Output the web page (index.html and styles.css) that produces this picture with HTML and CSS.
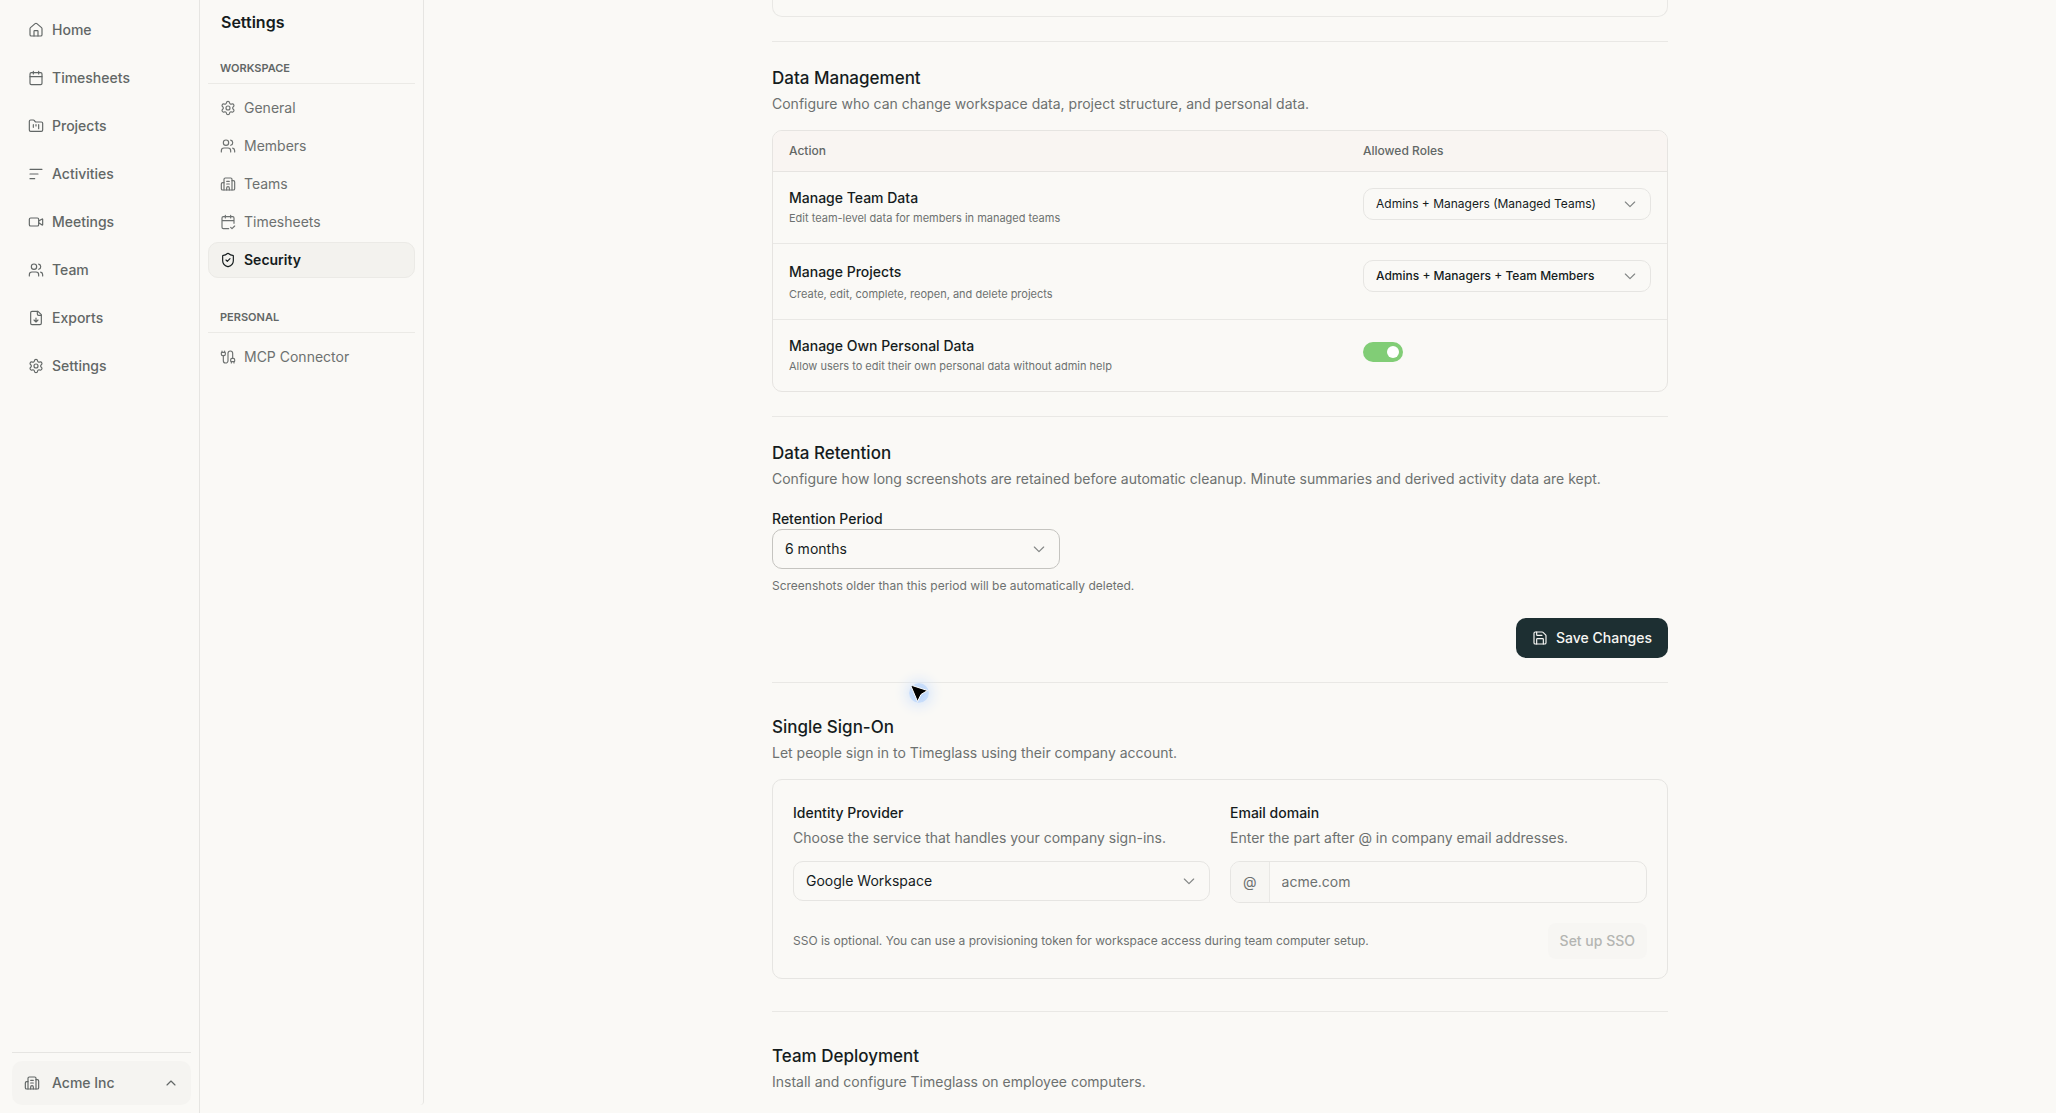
FILE: index.html
```html
<!DOCTYPE html>
<html lang="en">
<head>
    <meta charset="UTF-8">
    <meta name="viewport" content="width=device-width, initial-scale=1.0">
    <title>Security - Settings</title>
    <link rel="stylesheet" href="styles.css">
</head>
<body>
    <!-- Shared icons -->
    <svg class="sprite" aria-hidden="true">
        <symbol id="i-home" viewBox="0 0 24 24"><path d="M15 21v-7a1 1 0 0 0-1-1h-4a1 1 0 0 0-1 1v7"/><path d="M3 10a2 2 0 0 1 .7-1.5l7-6a2 2 0 0 1 2.6 0l7 6A2 2 0 0 1 21 10v9a2 2 0 0 1-2 2H5a2 2 0 0 1-2-2z"/></symbol>
        <symbol id="i-calendar" viewBox="0 0 24 24"><path d="M8 2v4M16 2v4M3 10h18"/><rect x="3" y="4" width="18" height="18" rx="2"/></symbol>
        <symbol id="i-folder" viewBox="0 0 24 24"><path d="M4 20h16a2 2 0 0 0 2-2V8a2 2 0 0 0-2-2h-7.9a2 2 0 0 1-1.7-.9l-.8-1.2A2 2 0 0 0 7.9 3H4a2 2 0 0 0-2 2v13a2 2 0 0 0 2 2z"/><path d="M8 10v4M12 10v2M16 10v6"/></symbol>
        <symbol id="i-lines" viewBox="0 0 24 24"><path d="M3 5h18M3 12h12M3 19h7"/></symbol>
        <symbol id="i-video" viewBox="0 0 24 24"><path d="m16 13 5.2 3.5a.5.5 0 0 0 .8-.4V7.9a.5.5 0 0 0-.8-.5L16 10.500"/><rect x="2" y="6" width="14" height="12" rx="2"/></symbol>
        <symbol id="i-users" viewBox="0 0 24 24"><path d="M16 21v-2a4 4 0 0 0-4-4H6a4 4 0 0 0-4 4v2"/><circle cx="9" cy="7" r="4"/><path d="M22 21v-2a4 4 0 0 0-3-3.900M16 3.100a4 4 0 0 1 0 7.800"/></symbol>
        <symbol id="i-export" viewBox="0 0 24 24"><path d="M15 2H6a2 2 0 0 0-2 2v16a2 2 0 0 0 2 2h12a2 2 0 0 0 2-2V7z"/><path d="M14 2v4a2 2 0 0 0 2 2h4M12 18v-6M9 15l3 3 3-3"/></symbol>
        <symbol id="i-gear" viewBox="0 0 24 24"><path d="M9.671 4.136a2.340 2.340 0 0 1 4.659 0 2.340 2.340 0 0 0 3.319 1.915 2.340 2.340 0 0 1 2.330 4.033 2.340 2.340 0 0 0 0 3.831 2.340 2.340 0 0 1-2.330 4.033 2.340 2.340 0 0 0-3.319 1.915 2.340 2.340 0 0 1-4.659 0 2.340 2.340 0 0 0-3.320-1.915 2.340 2.340 0 0 1-2.330-4.033 2.340 2.340 0 0 0 0-3.831A2.340 2.340 0 0 1 6.350 6.051a2.340 2.340 0 0 0 3.319-1.915"/><circle cx="12" cy="12" r="3"/></symbol>
        <symbol id="i-building" viewBox="0 0 24 24"><path d="M10 12h4M10 8h4M14 21v-3a2 2 0 0 0-4 0v3"/><path d="M6 10H4a2 2 0 0 0-2 2v7a2 2 0 0 0 2 2h16a2 2 0 0 0 2-2V9a2 2 0 0 0-2-2h-2"/><path d="M6 21V5a2 2 0 0 1 2-2h8a2 2 0 0 1 2 2v16"/></symbol>
        <symbol id="i-calendar-check" viewBox="0 0 24 24"><path d="M8 2v4M16 2v4M21 14V6a2 2 0 0 0-2-2H5a2 2 0 0 0-2 2v14a2 2 0 0 0 2 2h8M3 10h18M16 20l2 2 4-4"/></symbol>
        <symbol id="i-shield" viewBox="0 0 24 24"><path d="M20 13c0 5-3.500 7.500-7.660 8.950a1 1 0 0 1-.67-.01C7.500 20.500 4 18 4 13V6a1 1 0 0 1 1-1c2 0 4.500-1.200 6.240-2.720a1.170 1.170 0 0 1 1.520 0C14.510 3.810 17 5 19 5a1 1 0 0 1 1 1z"/><path d="m9 12 2 2 4-4"/></symbol>
        <symbol id="i-cable" viewBox="0 0 24 24"><path d="M17 19a1 1 0 0 1-1-1v-2a2 2 0 0 1 2-2h2a2 2 0 0 1 2 2v2a1 1 0 0 1-1 1zM17 21v-2M19 14V6.500a1 1 0 0 0-7 0v11a1 1 0 0 1-7 0V10M21 21v-2M3 5V3M4 10a2 2 0 0 1-2-2V6a1 1 0 0 1 1-1h4a1 1 0 0 1 1 1v2a2 2 0 0 1-2 2zM7 5V3"/></symbol>
        <symbol id="i-save" viewBox="0 0 24 24"><path d="M15.200 3a2 2 0 0 1 1.400.6l3.800 3.800a2 2 0 0 1 .6 1.400V19a2 2 0 0 1-2 2H5a2 2 0 0 1-2-2V5a2 2 0 0 1 2-2z"/><path d="M17 21v-7a1 1 0 0 0-1-1H8a1 1 0 0 0-1 1v7M7 3v4a1 1 0 0 0 1 1h7"/></symbol>
        <symbol id="i-down" viewBox="0 0 24 24"><path d="m5 9 7 7 7-7"/></symbol>
        <symbol id="i-up" viewBox="0 0 24 24"><path d="m6 15 6-6 6 6"/></symbol>
    </svg>

    <div class="app">
        <aside class="sidebar">
            <nav class="main-nav">
                <a href="#"><svg class="icon"><use href="#i-home"/></svg>Home</a>
                <a href="#"><svg class="icon"><use href="#i-calendar"/></svg>Timesheets</a>
                <a href="#"><svg class="icon"><use href="#i-folder"/></svg>Projects</a>
                <a href="#"><svg class="icon"><use href="#i-lines"/></svg>Activities</a>
                <a href="#"><svg class="icon"><use href="#i-video"/></svg>Meetings</a>
                <a href="#"><svg class="icon"><use href="#i-users"/></svg>Team</a>
                <a href="#"><svg class="icon"><use href="#i-export"/></svg>Exports</a>
                <a href="#"><svg class="icon"><use href="#i-gear"/></svg>Settings</a>
            </nav>
            <div class="sidebar-footer">
                <button class="workspace-button" type="button">
                    <svg class="icon"><use href="#i-building"/></svg>
                    <span>Acme Inc</span>
                    <svg class="icon"><use href="#i-up"/></svg>
                </button>
            </div>
        </aside>

        <aside class="settings-panel">
            <h1>Settings</h1>
            <h2>WORKSPACE</h2>
            <nav class="settings-nav">
                <a href="#"><svg class="icon"><use href="#i-gear"/></svg>General</a>
                <a href="#"><svg class="icon"><use href="#i-users"/></svg>Members</a>
                <a href="#"><svg class="icon"><use href="#i-building"/></svg>Teams</a>
                <a href="#"><svg class="icon"><use href="#i-calendar-check"/></svg>Timesheets</a>
                <a href="#" class="active"><svg class="icon"><use href="#i-shield"/></svg>Security</a>
            </nav>
            <h2>PERSONAL</h2>
            <nav class="settings-nav">
                <a href="#"><svg class="icon"><use href="#i-cable"/></svg>MCP Connector</a>
            </nav>
        </aside>

        <main class="main">
            <div class="content">
                <div class="card-end"></div>

                <section class="section">
                    <h2>Data Management</h2>
                    <p class="description">Configure who can change workspace data, project structure, and personal data.</p>
                    <table class="roles">
                        <thead>
                            <tr><th>Action</th><th class="roles-column">Allowed Roles</th></tr>
                        </thead>
                        <tbody>
                            <tr>
                                <td>
                                    <label class="row-title" for="teamData">Manage Team Data</label>
                                    <p class="row-text">Edit team-level data for members in managed teams</p>
                                </td>
                                <td>
                                    <div class="select small">
                                        <select id="teamData"><option>Admins + Managers (Managed Teams)</option></select>
                                        <svg class="icon"><use href="#i-down"/></svg>
                                    </div>
                                </td>
                            </tr>
                            <tr class="roomy">
                                <td>
                                    <label class="row-title" for="projects">Manage Projects</label>
                                    <p class="row-text">Create, edit, complete, reopen, and delete projects</p>
                                </td>
                                <td>
                                    <div class="select small strong">
                                        <select id="projects"><option>Admins + Managers + Team Members</option></select>
                                        <svg class="icon"><use href="#i-down"/></svg>
                                    </div>
                                </td>
                            </tr>
                            <tr>
                                <td>
                                    <label class="row-title" for="ownData">Manage Own Personal Data</label>
                                    <p class="row-text">Allow users to edit their own personal data without admin help</p>
                                </td>
                                <td><input class="switch" type="checkbox" id="ownData" checked></td>
                            </tr>
                        </tbody>
                    </table>
                </section>

                <section class="section">
                    <h2>Data Retention</h2>
                    <p class="description">Configure how long screenshots are retained before automatic cleanup. Minute summaries and derived activity data are kept.</p>
                    <div class="retention">
                        <label class="field-label" for="retention">Retention Period</label>
                        <div class="select">
                            <select id="retention"><option>6 months</option></select>
                            <svg class="icon"><use href="#i-down"/></svg>
                        </div>
                    </div>
                    <p class="hint">Screenshots older than this period will be automatically deleted.</p>
                    <div class="actions">
                        <button class="save-button" type="button"><svg class="icon"><use href="#i-save"/></svg>Save Changes</button>
                    </div>
                </section>

                <section class="section spaced">
                    <!-- Pointer -->
                    <svg class="pointer" viewBox="0 0 20 20" aria-hidden="true"><path d="M1.500 2 18.500 7.500 12 11.500 8.500 18.500z"/></svg>
                    <h2>Single Sign-On</h2>
                    <p class="description">Let people sign in to Timeglass using their company account.</p>
                    <div class="sso-card">
                        <div class="sso-fields">
                            <div>
                                <label class="field-label" for="provider">Identity Provider</label>
                                <p class="field-text">Choose the service that handles your company sign-ins.</p>
                                <div class="select">
                                    <select id="provider"><option>Google Workspace</option></select>
                                    <svg class="icon"><use href="#i-down"/></svg>
                                </div>
                            </div>
                            <div>
                                <label class="field-label" for="domain">Email domain</label>
                                <p class="field-text">Enter the part after @ in company email addresses.</p>
                                <div class="domain">
                                    <span>@</span>
                                    <input type="text" id="domain" placeholder="acme.com">
                                </div>
                            </div>
                        </div>
                        <div class="sso-footer">
                            <p class="hint">SSO is optional. You can use a provisioning token for workspace access during team computer setup.</p>
                            <button class="sso-button" type="button" disabled>Set up SSO</button>
                        </div>
                    </div>
                </section>

                <section class="section spaced">
                    <h2>Team Deployment</h2>
                    <p class="description">Install and configure Timeglass on employee computers.</p>
                </section>
            </div>
        </main>
    </div>
</body>
</html>
```
FILE: styles.css
```css
* {
    box-sizing: border-box;
}
body {
    margin: 0;
    background: #faf9f6;
    color: #151c1d;
    font-family: Inter, "Liberation Sans", sans-serif;
    font-size: 14px;
    line-height: 20px;
}
h1, h2, p {
    margin: 0;
}
a {
    color: inherit;
    text-decoration: none;
}
button, input, select {
    font: inherit;
    color: inherit;
}
.sprite {
    display: none;
}
.icon {
    width: 16px;
    height: 16px;
    flex: none;
    fill: none;
    stroke: currentColor;
    stroke-width: 1.75;
    stroke-linecap: round;
    stroke-linejoin: round;
}
.app {
    display: flex;
    height: 100vh;
    overflow: hidden;
}

/* Left navigation */
.sidebar {
    display: flex;
    flex-direction: column;
    justify-content: space-between;
    width: 200px;
    flex: none;
    padding: 6px 8px 8px 12px;
    border-right: 1px solid #e6e5e2;
    color: #626766;
    font-weight: 500;
}
.main-nav a {
    display: flex;
    align-items: center;
    gap: 8px;
    height: 48px;
    padding-left: 16px;
}
.sidebar-footer {
    border-top: 1px solid #e6e5e2;
    padding-top: 8px;
}
.workspace-button {
    display: flex;
    align-items: center;
    gap: 12px;
    width: 100%;
    height: 44px;
    padding: 0 12px;
    border: 0;
    border-radius: 10px;
    background: #f5f4f1;
    font-weight: 500;
}
.workspace-button span {
    flex: 1;
    text-align: left;
}

/* Settings navigation */
.settings-panel {
    width: 224px;
    flex: none;
    margin-bottom: 8px;
    padding: 12px 8px;
    border-right: 1px solid #e6e5e2;
    border-bottom-right-radius: 4px;
}
.settings-panel h1 {
    padding-left: 13px;
    font-size: 16px;
    font-weight: 600;
}
.settings-panel h2 {
    margin-top: 26px;
    padding: 0 12px 5px;
    border-bottom: 1px solid #ebeae6;
    color: #626766;
    font-size: 11px;
    font-weight: 600;
}
.settings-nav {
    display: grid;
    gap: 2px;
    padding: 6px 0 3px;
}
.settings-nav a {
    display: flex;
    align-items: center;
    gap: 8px;
    height: 36px;
    padding-left: 11px;
    border: 1px solid transparent;
    border-radius: 10px;
    color: #6d7170;
}
.settings-nav .active {
    background: #f3f2ee;
    border-color: #ebeae6;
    color: #151c1d;
    font-weight: 600;
}

/* Page */
.main {
    flex: 1;
    min-width: 0;
    padding-right: 40px;
    overflow: hidden;
}
.content {
    max-width: 896px;
    margin: 0 auto;
}
.card-end {
    height: 17px;
    margin-bottom: 24px;
    border: 1px solid #e9e8e5;
    border-top: 0;
    border-radius: 0 0 10px 10px;
}
.section {
    position: relative;
    border-top: 1px solid #e9e8e5;
    padding: 22px 0 24px;
}
.section h2 {
    font-size: 17px;
    font-weight: 500;
    line-height: 28px;
}
.description {
    margin-bottom: 14px;
    color: #6d7170;
    line-height: 24px;
}
.spaced {
    padding: 30px 0 32px;
}

/* Roles table */
.roles {
    width: 100%;
    border: 1px solid #e6e4e1;
    border-radius: 10px;
    border-spacing: 0;
    overflow: hidden;
}
.roles th {
    height: 41px;
    padding: 0 16px;
    border-bottom: 1px solid #e6e4e1;
    background: #f9f5f2;
    color: #626766;
    font-size: 12px;
    font-weight: 500;
    text-align: left;
}
.roles-column {
    width: 320px;
}
.roles td {
    padding: 16px 16px 15px;
    border-bottom: 1px solid #e9e8e5;
    vertical-align: top;
}
.roles tr:last-child td {
    border-bottom: 0;
}
.row-title {
    display: block;
    font-weight: 500;
}
.roomy .row-title {
    line-height: 24px;
}
.row-text {
    color: #6d7170;
    font-size: 11px;
}
.switch {
    appearance: none;
    display: block;
    width: 40px;
    height: 20px;
    margin: 6px 0 0;
    padding: 4px;
    border-radius: 10px;
    background: #81cd76;
}
.switch::before {
    content: "";
    display: block;
    width: 12px;
    height: 12px;
    border-radius: 50%;
    background: #fff;
}
.switch:checked::before {
    margin-left: auto;
}

/* Fields */
.select {
    position: relative;
}
.select select {
    appearance: none;
    display: block;
    width: 100%;
    height: 40px;
    padding: 0 36px 0 12px;
    border: 1px solid #e6e5e2;
    border-radius: 10px;
    background: transparent;
}
.select .icon {
    position: absolute;
    top: 0;
    bottom: 0;
    right: 13px;
    margin: auto 0;
    color: #848786;
    pointer-events: none;
}
.select.small select {
    height: 32px;
    font-size: 12px;
}
.select.strong select {
    font-weight: 500;
}
.retention {
    width: 288px;
    padding: 4px 0 7px;
}
.retention select {
    border-color: #c5c4c0;
}
.field-label {
    display: block;
    font-weight: 500;
}
.field-text {
    margin: 5px 0 13px;
    color: #6d7170;
}
.hint {
    color: #6d7170;
    font-size: 12px;
}
.actions {
    display: flex;
    justify-content: flex-end;
    margin-top: 22px;
}
.save-button {
    display: flex;
    align-items: center;
    gap: 8px;
    height: 40px;
    padding: 0 16px;
    border: 0;
    border-radius: 10px;
    background: #1d2f32;
    color: #f7f6f3;
    font-weight: 500;
}
.domain {
    display: flex;
    height: 42px;
    border: 1px solid #e6e5e2;
    border-radius: 10px;
    overflow: hidden;
    color: #6d7170;
    line-height: 40px;
}
.domain span {
    padding: 0 12px;
    border-right: 1px solid #e9e8e5;
    background: #f7f6f3;
}
.domain input {
    flex: 1;
    min-width: 0;
    padding: 0 12px;
    border: 0;
    background: transparent;
}
.domain input::placeholder {
    color: #6d7170;
}

/* Single sign-on */
.sso-card {
    padding: 23px 20px 19px;
    border: 1px solid #e6e5e2;
    border-radius: 10px;
}
.sso-fields {
    display: grid;
    grid-template-columns: 1fr 1fr;
    gap: 20px;
}
.sso-footer {
    display: flex;
    align-items: center;
    justify-content: space-between;
    margin-top: 20px;
}
.sso-button {
    height: 36px;
    padding: 0 12px;
    border: 0;
    border-radius: 8px;
    background: #f7f6f3;
    color: #b4b5b2;
    font-weight: 500;
}
.pointer {
    position: absolute;
    top: 0;
    left: 137px;
    width: 20px;
    height: 20px;
    border-radius: 50%;
    background: radial-gradient(#b4d2fb, #d3e3fa);
    box-shadow: 0 0 14px 2px #d3e3fa;
    fill: #000;
    stroke: #fff;
    stroke-width: 1;
}
```
